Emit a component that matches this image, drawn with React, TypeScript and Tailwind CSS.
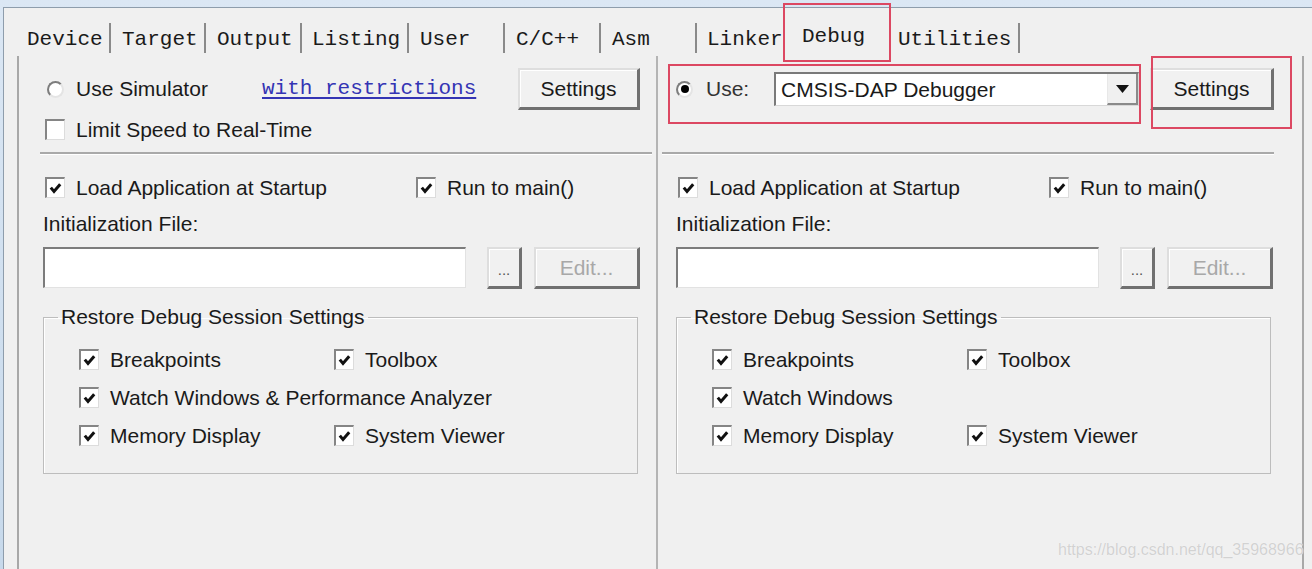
import React from 'react';

const sans = "font-['Liberation_Sans',Arial,sans-serif]";
const mono = "font-['Liberation_Mono','Courier_New',monospace]";

interface TabDef {
  label: string;
  width: string;
  pad: string;
  sep: boolean;
  active?: boolean;
}

const tabs: TabDef[] = [
  { label: 'Device', width: 'w-[94px]', pad: 'pl-[10px]', sep: true },
  { label: 'Target', width: 'w-[95px]', pad: 'pl-[11px]', sep: true },
  { label: 'Output', width: 'w-[96px]', pad: 'pl-[11px]', sep: true },
  { label: 'Listing', width: 'w-[107px]', pad: 'pl-[10px]', sep: true },
  { label: 'User', width: 'w-[96px]', pad: 'pl-[11px]', sep: true },
  { label: 'C/C++', width: 'w-[96px]', pad: 'pl-[11px]', sep: true },
  { label: 'Asm', width: 'w-[96px]', pad: 'pl-[11px]', sep: true },
  { label: 'Linker', width: 'w-[88px]', pad: 'pl-[10px]', sep: false },
  { label: 'Debug', width: 'w-[104px]', pad: 'pl-[17px]', sep: false, active: true },
  { label: 'Utilities', width: 'w-[131px]', pad: 'pl-[9px]', sep: true },
];

const Checkbox: React.FC<{ checked?: boolean }> = ({ checked }) => (
  <span className="inline-flex items-center justify-center w-[20px] h-[21px] shrink-0 bg-white border-t-2 border-l-2 border-r border-b border-t-[#858585] border-l-[#858585] border-r-[#dcdcdc] border-b-[#dcdcdc]">
    {checked && (
      <svg width="13" height="12" viewBox="0 0 13 12">
        <path d="M1.8 5.6 L5 9.4 L11.2 2.2" fill="none" stroke="#111" strokeWidth="3" />
      </svg>
    )}
  </span>
);

const Radio: React.FC<{ checked?: boolean; className?: string }> = ({ checked, className = '' }) => (
  <span
    className={
      'inline-flex items-center justify-center w-[17px] h-[17px] shrink-0 rounded-full bg-white border-2 border-t-[#7d7d7d] border-l-[#7d7d7d] border-r-[#e4e4e4] border-b-[#e4e4e4] ' +
      className
    }
  >
    {checked && <span className="w-[8px] h-[8px] rounded-full bg-black" />}
  </span>
);

const CheckItem: React.FC<{ label: string; className?: string }> = ({ label, className = '' }) => (
  <div className={'flex items-center h-[21px] ' + className}>
    <Checkbox checked />
    <span className="ml-[11px] whitespace-nowrap leading-[24px]">{label}</span>
  </div>
);

const Button: React.FC<{ className?: string; children: React.ReactNode }> = ({ className = '', children }) => (
  <div
    className={
      'flex items-center justify-center shrink-0 bg-[#f1f1f1] border-t-2 border-l-2 border-b-[3px] border-r-[3px] border-t-[#dedede] border-l-[#dedede] border-b-[#707070] border-r-[#707070] shadow-[inset_1px_1px_0_#ffffff] ' +
      className
    }
  >
    {children}
  </div>
);

const Separator: React.FC<{ className?: string }> = ({ className = '' }) => (
  <div className={'mt-[12px] h-[3px] border-t-2 border-t-[#a9a9a9] border-b border-b-white ' + className} />
);

const InitFile: React.FC = () => (
  <>
    <div className="mt-[14px] leading-[24px]">Initialization File:</div>
    <div className="mt-[11px] flex h-[42px]">
      <div className="w-[423px] h-[41px] bg-white border-t-2 border-l-2 border-r border-b border-t-[#7c7c7c] border-l-[#7c7c7c] border-r-[#e2e2e2] border-b-[#e2e2e2]" />
      <Button className="ml-[21px] w-[35px] h-[42px] text-[15px] text-[#555] pt-[6px]">...</Button>
      <Button className="ml-[12px] w-[106px] h-[42px] text-[#a8a8a8]">Edit...</Button>
    </div>
  </>
);

const RestoreGroup: React.FC<{ watch: string }> = ({ watch }) => (
  <fieldset className="mt-[16px] w-[595px] border border-[#bdbdbd] shadow-[inset_1px_1px_0_#ffffff] pl-[14px] pb-[27px]">
    <legend className="px-[3px] leading-[24px]">Restore Debug Session Settings</legend>
    <div className="flex mt-[20px]">
      <CheckItem label="Breakpoints" className="ml-[21px] w-[255px]" />
      <CheckItem label="Toolbox" />
    </div>
    <div className="flex mt-[17px]">
      <CheckItem label={watch} className="ml-[21px]" />
    </div>
    <div className="flex mt-[17px]">
      <CheckItem label="Memory Display" className="ml-[21px] w-[255px]" />
      <CheckItem label="System Viewer" />
    </div>
  </fieldset>
);

const StartupRows: React.FC = () => (
  <div className="flex mt-[22px]">
    <CheckItem label="Load Application at Startup" className="ml-[2px] w-[371px]" />
    <CheckItem label="Run to main()" />
  </div>
);

export default function App() {
  return (
    <div className={`relative w-[1312px] h-[569px] overflow-hidden bg-gradient-to-b from-[#dbe7f4] to-[#c7d9eb] pl-[3px] pt-[7px] text-[21px] text-[#1a1a1a] ${sans}`}>
      <div className="h-full flex flex-col border-l border-t border-[#8e9dac] bg-[#f0f0f0]">
        {/* tab strip */}
        <div className={`flex mt-[15px] ml-[13px] h-[30px] text-[21px] ${mono}`}>
          {tabs.map((t) => (
            <div
              key={t.label}
              className={
                'h-[30px] whitespace-nowrap ' +
                t.width +
                ' ' +
                t.pad +
                (t.sep ? ' border-r-2 border-r-[#8a8a8a]' : '') +
                (t.active ? ' leading-[28px]' : ' leading-[30px] pt-[2px]')
              }
            >
              {t.label}
            </div>
          ))}
        </div>

        {/* tab page */}
        <div className="flex-1 mt-[3px] ml-[13px] w-[1287px] flex border-l-2 border-r-2 border-[#a8a8a8]">
          {/* simulator column */}
          <div className="w-[637px] pl-[24px] pr-[16px] pt-[12px]">
            <div className="flex items-center h-[42px]">
              <Radio className="ml-[4px]" />
              <span className="ml-[12px] w-[186px]">Use Simulator</span>
              <span className={`text-[21px] text-[#3434b4] underline underline-offset-[3px] ${mono}`}>with restrictions</span>
              <Button className="ml-auto w-[122px] h-[42px]">Settings</Button>
            </div>
            <div className="mt-[9px] flex items-center h-[21px] ml-[2px]">
              <Checkbox />
              <span className="ml-[11px]">Limit Speed to Real-Time</span>
            </div>
            <Separator className="-ml-[3px] -mr-[12px]" />
            <StartupRows />
            <InitFile />
            <RestoreGroup watch="Watch Windows & Performance Analyzer" />
          </div>

          {/* target debugger column */}
          <div className="w-[646px] border-l-2 border-l-[#b4b4b4] pl-[18px] pr-[28px] pt-[12px]">
            <div className="flex items-center h-[42px]">
              <Radio checked />
              <span className="ml-[13px] w-[68px] text-[#333]">Use:</span>
              <div className="w-[365px] h-[34px] flex bg-white border-t-2 border-l-2 border-r border-b border-t-[#7a7a7a] border-l-[#7a7a7a] border-r-[#d8d8d8] border-b-[#d8d8d8]">
                <span className="flex-1 pl-[5px] leading-[32px]">CMSIS-DAP Debugger</span>
                <div className="w-[31px] h-full flex items-center justify-center bg-[#f0f0f0] border-b-2 border-r-2 border-b-[#8a8a8a] border-r-[#8a8a8a] border-l border-l-[#e8e8e8]">
                  <svg width="13" height="8" viewBox="0 0 13 8">
                    <path d="M0 0 H13 L6.5 8 Z" fill="#111" />
                  </svg>
                </div>
              </div>
              <Button className="ml-auto w-[124px] h-[42px]">Settings</Button>
            </div>
            <div className="mt-[9px] h-[21px]" />
            <Separator className="-ml-[14px]" />
            <StartupRows />
            <InitFile />
            <RestoreGroup watch="Watch Windows" />
          </div>
        </div>
      </div>

      {/* annotation boxes */}
      <div className="absolute left-[783px] top-[3px] w-[108px] h-[59px] border-2 border-[#dc4862]" />
      <div className="absolute left-[668px] top-[64px] w-[473px] h-[60px] border-2 border-[#dc4862]" />
      <div className="absolute left-[1151px] top-[56px] w-[141px] h-[73px] border-2 border-[#dc4862]" />

      {/* watermark */}
      <div className="absolute left-[1058px] top-[539px] text-[16px] leading-[22px] text-[#d2d2d2] [text-shadow:0_0_1px_#ffffff] whitespace-nowrap">
        https://blog.csdn.net/qq_35968966
      </div>
    </div>
  );
}
